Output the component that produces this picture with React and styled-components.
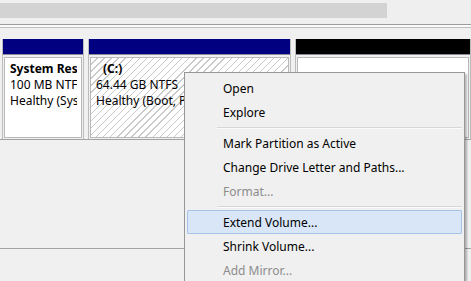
import styled, {createGlobalStyle} from 'styled-components'

const Global = createGlobalStyle`
    html, body {
        margin: 0;
        padding: 0;
        background: #f0f0f0;
        overflow: hidden;
    }
    body {
        font-family: "Noto Sans", "Open Sans", sans-serif;
        font-size: 12px;
        color: #000;
    }
`

const Page = styled.div`
    position: relative;
    width: 471px;
    height: 281px;
    overflow: hidden;
    background: #f0f0f0;
`

const TopStrip = styled.div`
    height: 24px;
    padding-top: 3px;
    box-sizing: border-box;
    background: #efefef;
`

const ListBar = styled.div`
    width: 387px;
    height: 15px;
    background: #d3d3d3;
`

const Splitter = styled.div`
    height: 2px;
    border-top: 1px solid #9c9c9c;
    border-bottom: 1px solid #bdbdbd;
    background: #fafafa;
`

const DiskRow = styled.div`
    display: flex;
    gap: 4px;
    padding: 11px 0 0 2px;
    height: 112px;
    box-sizing: border-box;
    border-bottom: 1px solid #a3a3a3;
`

const Column = styled.div`
    display: flex;
    flex-direction: column;
    width: ${props => props.width ? `${props.width}px` : 'auto'};
    flex: ${props => props.width ? 'none' : '1'};
    gap: 2px;
    border-left: 1px solid #bcbcbc;
    border-right: 1px solid #bcbcbc;
`

const Header = styled.div`
    height: 15px;
    background: ${props => props.color};
    border-bottom: 1px solid #8a8a9a;
`

const Body = styled.div`
    flex: 1;
    margin: 0 1px 1px;
    padding: 3px 4px 0 ${props => props.indent || 5}px;
    border: 1px solid #b9b9b9;
    background: ${props => props.selected
        ? 'repeating-linear-gradient(135deg, #ffffff 0 4px, #c9c9c9 4px 5px)'
        : '#ffffff'};
    overflow: hidden;
    white-space: nowrap;
    line-height: 16px;
`

const Line = styled.div`
    font-weight: ${props => props.bold ? 700 : 400};
    padding-left: ${props => props.shift || 0}px;
    overflow: hidden;
`

const LowerPane = styled.div`
    height: 108px;
    border-bottom: 1px solid #a3a3a3;
`

const Menu = styled.div`
    position: absolute;
    left: 184px;
    top: 72px;
    width: 281px;
    height: 240px;
    box-sizing: border-box;
    padding: 3px 2px;
    background: #f0f0f0;
    border: 1px solid #979797;
    box-shadow: 2px 2px 2px rgba(0, 0, 0, 0.28);
`

const Item = styled.div`
    height: 24px;
    line-height: 24px;
    padding-left: 35px;
    box-sizing: border-box;
    color: ${props => props.disabled ? '#8c8c8c' : '#000'};
    background: ${props => props.active ? '#d8e6f8' : 'transparent'};
    border: 1px solid ${props => props.active ? '#a8c3e8' : 'transparent'};
    border-radius: 1px;
    white-space: nowrap;
`

const Separator = styled.div`
    height: 7px;
    display: flex;
    align-items: center;
    padding-left: 30px;

    &::after {
        content: '';
        flex: 1;
        height: 1px;
        background: #d7d7d7;
        border-bottom: 1px solid #fbfbfb;
    }
`

const partitions = [
    {
        width: 80,
        color: '#000080',
        lines: ['System Reserved', '100 MB NTFS', 'Healthy (System, Active, Primary Partition)'],
    },
    {
        width: 201,
        color: '#000080',
        selected: true,
        shift: 7,
        lines: ['(C:)', '64.44 GB NTFS', 'Healthy (Boot, Page File, Crash Dump, Primary Partition)'],
    },
    {
        color: '#000000',
        lines: [],
    },
]

const menu = [
    {label: 'Open'},
    {label: 'Explore'},
    {sep: true},
    {label: 'Mark Partition as Active'},
    {label: 'Change Drive Letter and Paths...'},
    {label: 'Format...', disabled: true},
    {sep: true},
    {label: 'Extend Volume...', active: true},
    {label: 'Shrink Volume...'},
    {label: 'Add Mirror...', disabled: true},
]

export default function App() {
    return (
        <Page>
            <Global />
            <TopStrip>
                <ListBar />
            </TopStrip>
            <Splitter />
            <DiskRow>
                {partitions.map((p, i) => (
                    <Column key={i} width={p.width}>
                        <Header color={p.color} />
                        <Body selected={p.selected}>
                            {p.lines.map((text, j) => (
                                <Line key={j} bold={j === 0} shift={j === 0 ? p.shift : 0}>{text}</Line>
                            ))}
                        </Body>
                    </Column>
                ))}
            </DiskRow>
            <LowerPane />
            <Menu>
                {menu.map((m, i) => m.sep
                    ? <Separator key={i} />
                    : <Item key={i} disabled={m.disabled} active={m.active}>{m.label}</Item>
                )}
            </Menu>
        </Page>
    )
}
